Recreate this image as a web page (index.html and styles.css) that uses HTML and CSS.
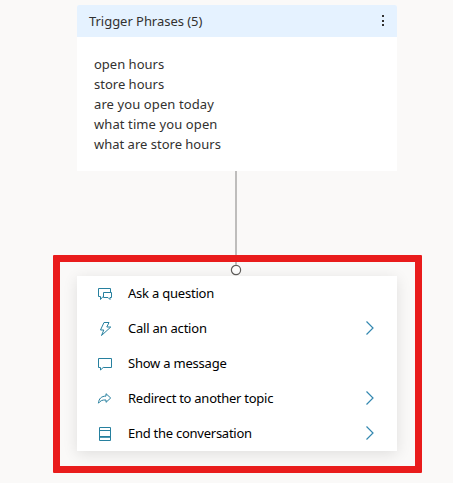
FILE: index.html
```html
<!DOCTYPE html>
<html lang="en">
<head>
<meta charset="utf-8">
<title>Authoring canvas</title>
<link rel="stylesheet" href="styles.css">
</head>
<body>
<main class="canvas">
  <section class="trigger">
    <header class="trigger-header">
      <span class="title">Trigger Phrases (5)</span>
      <svg class="more" width="4" height="12" viewBox="0 0 4 12"><path d="M1 0h2v2H1zM1 5h2v2H1zM1 9h2v2H1z"/></svg>
    </header>
    <ul class="phrases">
      <li>open hours</li>
      <li>store hours</li>
      <li class="wide">are you open today</li>
      <li class="wide">what time you open</li>
      <li>what are store hours</li>
    </ul>
  </section>
  <div class="connector"></div>
  <svg class="node" width="12" height="11" viewBox="0 0 12 11"><circle cx="6" cy="5" r="4.600"/></svg>
  <nav class="menu">
    <div class="item">
      <svg class="icon" width="16" height="16" viewBox="0 0 16 16"><path d="M6.500 11.500H6l-2.500 3v-3h-2v-8h12v4M6.500 7.500h8v5H13v2l-2-2H6.500z"/></svg>
      <span class="label">Ask a question</span>
    </div>
    <div class="item">
      <svg class="icon" width="16" height="16" viewBox="0 0 16 16"><path d="M7 2.500h5L9.800 7h4L4.500 15.500 6.800 10H3.500z"/></svg>
      <span class="label">Call an action</span>
      <svg class="chevron" width="8" height="14" viewBox="0 0 8 14"><path d="M.5.5 7 7 .5 13.500"/></svg>
    </div>
    <div class="item">
      <svg class="icon" width="16" height="16" viewBox="0 0 16 16"><path d="M1.500 3.500h13v9H6.200L3.500 15v-2.500h-2z"/></svg>
      <span class="label">Show a message</span>
    </div>
    <div class="item">
      <svg class="icon" width="16" height="16" viewBox="0 0 16 16"><path d="M9 3.700 13.700 8 9 12.300V10C5.500 9.800 3.500 10.500 1.500 13.200 1.700 8.700 4.500 6.100 9 6.100z"/></svg>
      <span class="label tight">Redirect to another topic</span>
      <svg class="chevron" width="8" height="14" viewBox="0 0 8 14"><path d="M.5.5 7 7 .5 13.500"/></svg>
    </div>
    <div class="item">
      <svg class="icon" width="16" height="16" viewBox="0 0 16 16"><path d="M2.500 2.500h11v13h-11zM2.500 5.500h11M2.500 11.500h11M2.500 12.300h11"/></svg>
      <span class="label tight">End the conversation</span>
      <svg class="chevron" width="8" height="14" viewBox="0 0 8 14"><path d="M.5.5 7 7 .5 13.500"/></svg>
    </div>
  </nav>
  <div class="highlight"></div>
</main>
</body>
</html>
```
FILE: styles.css
```css
* { box-sizing: border-box; }
body {
  margin: 0;
  background: #faf9f8;
  font: 13px/20px "Noto Sans", "Open Sans", sans-serif;
  color: #323130;
}
.canvas {
  position: relative;
  display: flex;
  flex-direction: column;
  height: 483px;
  padding: 5px 56px 0 77px;
  overflow: hidden;
}
.trigger {
  height: 166px;
  background: #fff;
  border-radius: 2px 2px 0 0;
}
.trigger-header {
  display: flex;
  align-items: center;
  justify-content: space-between;
  height: 32px;
  padding: 0 12px;
  background: #e5f2ff;
  border-radius: 2px 2px 0 0;
}
.title { letter-spacing: -.04px; }
.more { fill: #323130; }
.phrases {
  margin: 0;
  padding: 17px;
  list-style: none;
}
.phrases li {
  height: 20px;
  white-space: nowrap;
}
.phrases .wide { letter-spacing: .1px; }
.connector {
  width: 2px;
  height: 94px;
  margin-left: 158px;
  background: #bebdbc;
}
.node {
  flex: none;
  margin-left: 153px;
  fill: #fff;
  stroke: #605e5c;
  stroke-width: 1.2;
}
.menu {
  height: 175px;
  background: #fff;
  color: #000;
  box-shadow: 0 3px 14px rgba(0, 0, 0, .11);
}
.item {
  display: flex;
  align-items: center;
  height: 35px;
  padding: 0 23px 1px 20px;
}
.icon {
  margin-right: 15px;
  fill: none;
  stroke: #27809f;
}
.label {
  white-space: nowrap;
  letter-spacing: -.22px;
}
.label.tight { letter-spacing: -.26px; }
.chevron {
  margin-left: auto;
  fill: none;
  stroke: #3488b0;
  stroke-width: 1.2;
}
.highlight {
  position: absolute;
  left: 53px;
  top: 255px;
  width: 369px;
  height: 218px;
  border: 7px solid #e91c1c;
  border-radius: 1px;
}
```
